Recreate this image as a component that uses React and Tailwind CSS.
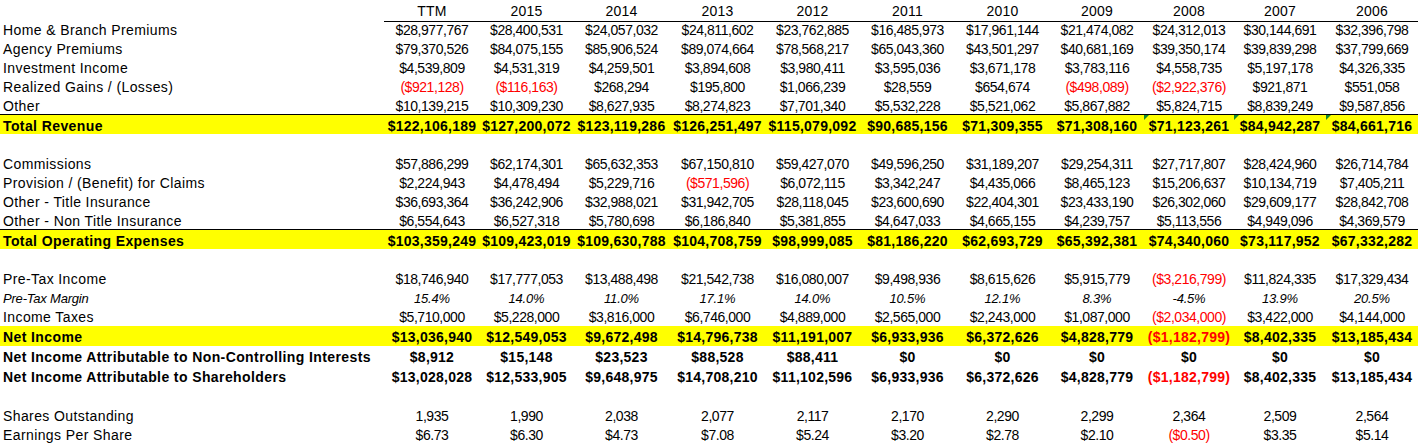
const COLS = "grid grid-cols-[384px_96px_93px_97px_95px_95px_95px_95px_94px_90px_92px_92px]";

const YEARS = ["TTM", "2015", "2014", "2013", "2012", "2011", "2010", "2009", "2008", "2007", "2006"];

const ROWS = [
  { label: "Home & Branch Premiums", values: ["$28,977,767", "$28,400,531", "$24,057,032", "$24,811,602", "$23,762,885", "$16,485,973", "$17,961,144", "$21,474,082", "$24,312,013", "$30,144,691", "$32,396,798"] },
  { label: "Agency Premiums", values: ["$79,370,526", "$84,075,155", "$85,906,524", "$89,074,664", "$78,568,217", "$65,043,360", "$43,501,297", "$40,681,169", "$39,350,174", "$39,839,298", "$37,799,669"] },
  { label: "Investment Income", values: ["$4,539,809", "$4,531,319", "$4,259,501", "$3,894,608", "$3,980,411", "$3,595,036", "$3,671,178", "$3,783,116", "$4,558,735", "$5,197,178", "$4,326,335"] },
  { label: "Realized Gains / (Losses)", values: ["($921,128)", "($116,163)", "$268,294", "$195,800", "$1,066,239", "$28,559", "$654,674", "($498,089)", "($2,922,376)", "$921,871", "$551,058"] },
  { label: "Other", values: ["$10,139,215", "$10,309,230", "$8,627,935", "$8,274,823", "$7,701,340", "$5,532,228", "$5,521,062", "$5,867,882", "$5,824,715", "$8,839,249", "$9,587,856"] },
  { label: "Total Revenue", kind: "total", flags: [8, 9, 10], values: ["$122,106,189", "$127,200,072", "$123,119,286", "$126,251,497", "$115,079,092", "$90,685,156", "$71,309,355", "$71,308,160", "$71,123,261", "$84,942,287", "$84,661,716"] },
  { kind: "blank" },
  { label: "Commissions", values: ["$57,886,299", "$62,174,301", "$65,632,353", "$67,150,810", "$59,427,070", "$49,596,250", "$31,189,207", "$29,254,311", "$27,717,807", "$28,424,960", "$26,714,784"] },
  { label: "Provision / (Benefit) for Claims", values: ["$2,224,943", "$4,478,494", "$5,229,716", "($571,596)", "$6,072,115", "$3,342,247", "$4,435,066", "$8,465,123", "$15,206,637", "$10,134,719", "$7,405,211"] },
  { label: "Other - Title Insurance", values: ["$36,693,364", "$36,242,906", "$32,988,021", "$31,942,705", "$28,118,045", "$23,600,690", "$22,404,301", "$23,433,190", "$26,302,060", "$29,609,177", "$28,842,708"] },
  { label: "Other - Non Title Insurance", values: ["$6,554,643", "$6,527,318", "$5,780,698", "$6,186,840", "$5,381,855", "$4,647,033", "$4,665,155", "$4,239,757", "$5,113,556", "$4,949,096", "$4,369,579"] },
  { label: "Total Operating Expenses", kind: "total", values: ["$103,359,249", "$109,423,019", "$109,630,788", "$104,708,759", "$98,999,085", "$81,186,220", "$62,693,729", "$65,392,381", "$74,340,060", "$73,117,952", "$67,332,282"] },
  { kind: "blank" },
  { label: "Pre-Tax Income", values: ["$18,746,940", "$17,777,053", "$13,488,498", "$21,542,738", "$16,080,007", "$9,498,936", "$8,615,626", "$5,915,779", "($3,216,799)", "$11,824,335", "$17,329,434"] },
  { label: "Pre-Tax Margin", kind: "italic", values: ["15.4%", "14.0%", "11.0%", "17.1%", "14.0%", "10.5%", "12.1%", "8.3%", "-4.5%", "13.9%", "20.5%"] },
  { label: "Income Taxes", values: ["$5,710,000", "$5,228,000", "$3,816,000", "$6,746,000", "$4,889,000", "$2,565,000", "$2,243,000", "$1,087,000", "($2,034,000)", "$3,422,000", "$4,144,000"] },
  { label: "Net Income", kind: "net", values: ["$13,036,940", "$12,549,053", "$9,672,498", "$14,796,738", "$11,191,007", "$6,933,936", "$6,372,626", "$4,828,779", "($1,182,799)", "$8,402,335", "$13,185,434"] },
  { label: "Net Income Attributable to Non-Controlling Interests", kind: "bold", values: ["$8,912", "$15,148", "$23,523", "$88,528", "$88,411", "$0", "$0", "$0", "$0", "$0", "$0"] },
  { label: "Net Income Attributable to Shareholders", kind: "bold", values: ["$13,028,028", "$12,533,905", "$9,648,975", "$14,708,210", "$11,102,596", "$6,933,936", "$6,372,626", "$4,828,779", "($1,182,799)", "$8,402,335", "$13,185,434"] },
  { kind: "blank" },
  { label: "Shares Outstanding", values: ["1,935", "1,990", "2,038", "2,077", "2,117", "2,170", "2,290", "2,299", "2,364", "2,509", "2,564"] },
  { label: "Earnings Per Share", values: ["$6.73", "$6.30", "$4.73", "$7.08", "$5.24", "$3.20", "$2.78", "$2.10", "($0.50)", "$3.35", "$5.14"] },
];

function Row({ row }) {
  if (row.kind === "blank") return <div className="h-[19px]" />;

  const bold = row.kind === "total" || row.kind === "net" || row.kind === "bold";
  const italic = row.kind === "italic";

  const rowClass = {
    total: "h-[20px] border-t border-black bg-[#ffff00]",
    net: "mt-px h-[20px] bg-[#ffff00]",
    bold: "h-[20px]",
    italic: "h-[19px]",
  }[row.kind] || "h-[19px]";

  return (
    <div className={`${COLS} ${rowClass}`}>
      <div
        className={[
          "flex h-full items-center whitespace-nowrap pl-[3px] pt-[2px]",
          bold ? "font-bold tracking-[0.4px]" : italic ? "text-[13px] italic tracking-[-0.2px]" : "tracking-[0.4px]",
        ].join(" ")}
      >
        {row.label}
      </div>
      {row.values.map((v, i) => (
        <div
          key={i}
          className={[
            "relative flex h-full items-center justify-center whitespace-nowrap pt-[2px]",
            bold ? "font-bold tracking-[0.25px]" : italic ? "text-[13px] italic tracking-[-0.2px]" : "tracking-[-0.45px]",
            v.startsWith("(") ? "text-[#ff0000]" : "",
          ].join(" ")}
        >
          {row.flags && row.flags.includes(i) && (
            <span className="absolute left-0 top-0 h-0 w-0 border-r-[5px] border-t-[5px] border-r-transparent border-t-[#128a2c]" />
          )}
          {v}
        </div>
      ))}
    </div>
  );
}

export default function App() {
  return (
    <div className="h-[443px] w-[1418px] overflow-hidden bg-white font-['Liberation_Sans',Arial,sans-serif] text-[14px] leading-[19px] text-black">
      <div className={`${COLS} h-[19px]`}>
        <div />
        {YEARS.map((y) => (
          <div key={y} className="flex h-full items-center justify-center border-b border-black pt-[2px] tracking-[0.2px]">
            {y}
          </div>
        ))}
      </div>
      {ROWS.map((row, i) => (
        <Row key={i} row={row} />
      ))}
    </div>
  );
}
